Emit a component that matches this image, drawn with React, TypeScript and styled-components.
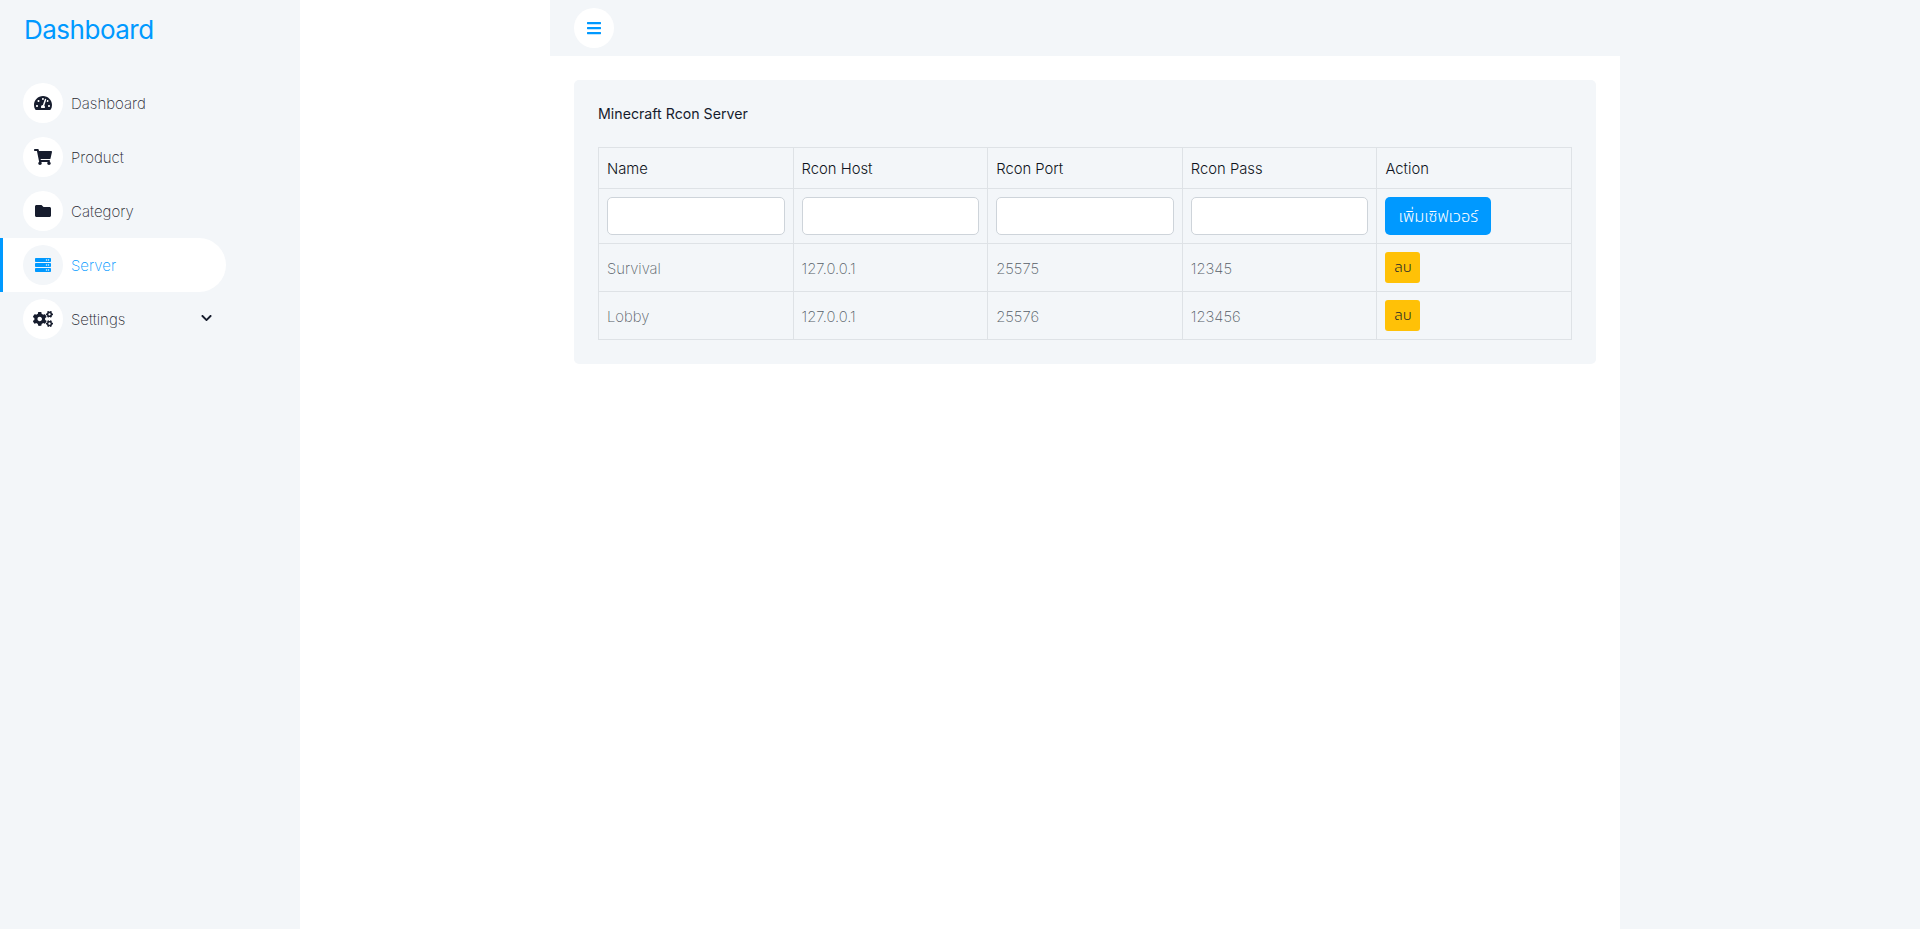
import styled, { createGlobalStyle } from 'styled-components';
import {
  FaBars,
  FaChevronDown,
  FaCogs,
  FaFolder,
  FaServer,
  FaShoppingCart,
  FaTachometerAlt,
} from 'react-icons/fa';

const GlobalStyle = createGlobalStyle`
  html, body {
    margin: 0;
    padding: 0;
    height: 100%;
    background: #fff;
  }

  body {
    font-family: 'Inter', 'Noto Sans', 'Noto Sans Thai', 'DejaVu Sans', sans-serif;
    font-weight: 300;
    font-size: 15px;
    color: #6c757d;
  }

  * {
    box-sizing: border-box;
  }
`;

const Layout = styled.div`
  display: flex;
  min-height: 929px;
`;

const Sidebar = styled.aside`
  width: 300px;
  flex-shrink: 0;
  background: #f3f6f9;
`;

const Brand = styled.div`
  height: 63px;
  padding: 13px 0 0 24px;
  font-size: 26px;
  line-height: 34px;
  font-weight: 400;
  letter-spacing: -0.5px;
  color: #0099ff;
`;

const Menu = styled.nav`
  display: flex;
  flex-direction: column;
  padding-top: 13px;
`;

const MenuItem = styled.a<{ $active?: boolean }>`
  display: flex;
  align-items: center;
  gap: 8px;
  width: 226px;
  height: 54px;
  padding-left: ${(p) => (p.$active ? '20px' : '23px')};
  padding-right: 14px;
  border-left: ${(p) => (p.$active ? '3px solid #0099ff' : 'none')};
  border-radius: ${(p) => (p.$active ? '0 27px 27px 0' : '0')};
  background: ${(p) => (p.$active ? '#fff' : 'transparent')};
  color: ${(p) => (p.$active ? '#0099ff' : '#1f2630')};
  font-weight: 200;
`;

const IconCircle = styled.span<{ $active?: boolean; $size: number }>`
  display: flex;
  align-items: center;
  justify-content: center;
  width: 40px;
  height: 40px;
  border-radius: 50%;
  font-size: ${(p) => p.$size}px;
  background: ${(p) => (p.$active ? '#f3f6f9' : '#fff')};
  color: ${(p) => (p.$active ? '#0099ff' : '#161c2d')};
`;

const MenuLabel = styled.span`
  flex: 1;
`;

const Chevron = styled(FaChevronDown)`
  width: 11px;
  height: 12px;
  margin-bottom: 3px;
  color: #161c2d;
`;

const Spacer = styled.div`
  width: 250px;
  flex-shrink: 0;
`;

const Main = styled.main`
  flex: 1;
  display: flex;
  flex-direction: column;
  background: #f3f6f9;
`;

const Topbar = styled.header`
  height: 56px;
  padding: 8px 24px;
`;

const MenuToggle = styled.button`
  display: flex;
  align-items: center;
  justify-content: center;
  width: 40px;
  height: 40px;
  padding: 0;
  border: none;
  border-radius: 50%;
  background: #fff;
  color: #0099ff;
  font-size: 16px;
`;

const Content = styled.section`
  flex: 1;
  width: 1070px;
  padding: 24px;
  background: #fff;
`;

const Card = styled.div`
  padding: 24px;
  border-radius: 5px;
  background: #f3f6f9;
`;

const CardTitle = styled.h6`
  margin: 0 0 24px;
  height: 19px;
  font-size: 14.2px;
  line-height: 19px;
  font-weight: 400;
  color: #161c2d;
`;

const Table = styled.table`
  width: 100%;
  table-layout: fixed;
  border-collapse: collapse;
`;

const HeadCell = styled.th`
  padding: 9px 8px 7px;
  border: 1px solid #dee2e6;
  font-size: 14.8px;
  line-height: 24px;
  font-weight: 300;
  text-align: left;
  color: #0e1320;
`;

const Cell = styled.td`
  padding: 8px;
  border: 1px solid #dee2e6;
  line-height: 24px;
  vertical-align: top;
`;

const TextCell = styled(Cell)`
  padding-top: 13px;
  padding-bottom: 10px;
  font-size: 14.8px;
  font-weight: 200;
  color: #565e67;
`;

const Input = styled.input`
  display: block;
  width: 100%;
  height: 38px;
  border: 1px solid #ced4da;
  border-radius: 5px;
  background: #fff;
`;

const AddButton = styled.button`
  display: block;
  width: 106px;
  height: 38px;
  padding: 0;
  border: none;
  border-radius: 5px;
  background: #0099ff;
  color: #fff;
  font: inherit;
  font-size: 16.4px;
`;

const DeleteButton = styled.button`
  display: block;
  width: 35px;
  height: 31px;
  padding: 0 0 2px;
  border: none;
  border-radius: 3px;
  background: #ffc107;
  color: #212529;
  font: inherit;
  font-size: 15px;
`;

const menu = [
  { label: 'Dashboard', icon: <FaTachometerAlt />, size: 18 },
  { label: 'Product', icon: <FaShoppingCart />, size: 18 },
  { label: 'Category', icon: <FaFolder />, size: 16 },
  { label: 'Server', icon: <FaServer />, size: 16, active: true },
  { label: 'Settings', icon: <FaCogs />, size: 20, more: true },
];

const servers = [
  { name: 'Survival', host: '127.0.0.1', port: '25575', pass: '12345' },
  { name: 'Lobby', host: '127.0.0.1', port: '25576', pass: '123456' },
];

const App = () => {
  return (
    <Layout>
      <GlobalStyle />
      <Sidebar>
        <Brand>Dashboard</Brand>
        <Menu>
          {menu.map((item) => (
            <MenuItem key={item.label} $active={item.active}>
              <IconCircle $active={item.active} $size={item.size}>{item.icon}</IconCircle>
              <MenuLabel>{item.label}</MenuLabel>
              {item.more && <Chevron />}
            </MenuItem>
          ))}
        </Menu>
      </Sidebar>
      <Spacer />
      <Main>
        <Topbar>
          <MenuToggle>
            <FaBars />
          </MenuToggle>
        </Topbar>
        <Content>
          <Card>
            <CardTitle>Minecraft Rcon Server</CardTitle>
            <Table>
              <thead>
                <tr>
                  <HeadCell>Name</HeadCell>
                  <HeadCell>Rcon Host</HeadCell>
                  <HeadCell>Rcon Port</HeadCell>
                  <HeadCell>Rcon Pass</HeadCell>
                  <HeadCell>Action</HeadCell>
                </tr>
              </thead>
              <tbody>
                <tr>
                  <Cell><Input /></Cell>
                  <Cell><Input /></Cell>
                  <Cell><Input /></Cell>
                  <Cell><Input /></Cell>
                  <Cell><AddButton>เพิ่มเซิฟเวอร์</AddButton></Cell>
                </tr>
                {servers.map((s) => (
                  <tr key={s.name}>
                    <TextCell>{s.name}</TextCell>
                    <TextCell>{s.host}</TextCell>
                    <TextCell>{s.port}</TextCell>
                    <TextCell>{s.pass}</TextCell>
                    <Cell><DeleteButton>ลบ</DeleteButton></Cell>
                  </tr>
                ))}
              </tbody>
            </Table>
          </Card>
        </Content>
      </Main>
    </Layout>
  );
};

export default App;
